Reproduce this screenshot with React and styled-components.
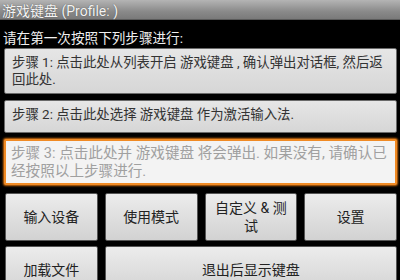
import React from 'react';
import styled, { createGlobalStyle } from 'styled-components';

const GlobalStyle = createGlobalStyle`
  html, body {
    margin: 0;
    padding: 0;
    background: #000;
  }
  body {
    font-family: "Roboto", "Noto Sans CJK SC", sans-serif;
  }
`;

const Screen = styled.div`
  width: 400px;
  height: 280px;
  overflow: hidden;
  background: #000;
`;

const TitleBar = styled.div`
  height: 19px;
  display: flex;
  align-items: center;
  padding-left: 2px;
  background: linear-gradient(#b4b4b4, #8a8a8a 60%, #7a7a7a);
  border-bottom: 1px solid #5a5a5a;
  color: #f4f4f4;
  font-size: 14px;
  text-shadow: 0 0 1px #444;
`;

const Intro = styled.div`
  color: #f0f0f0;
  font-size: 13.6px;
  padding: 7px 3px 0;
  height: 21px;
`;

const Steps = styled.div`
  display: flex;
  flex-direction: column;
  gap: 6px;
  padding: 0 3px 0 4px;
`;

const Step = styled.div`
  background: ${p => (p.$active ? '#f3f3f3' : 'linear-gradient(#e6e6e6, #d6d6d6)')};
  border: ${p => (p.$active ? '2px solid #f08a24' : '1px solid #6a6a6a')};
  box-shadow: ${p => (p.$active ? '0 0 2px 1px #c86a10' : 'none')};
  border-radius: 2px;
  color: ${p => (p.$active ? '#a0a0a0' : '#333')};
  font-size: ${p => (p.$active ? '14.6px' : '13.4px')};
  line-height: ${p => (p.$active ? '18px' : '17px')};
  padding: ${p => (p.$active ? '3px 5px 3px 5px' : '5px 4px 5px 7px')};
  min-height: ${p => p.$h}px;
  box-sizing: border-box;
`;

const Buttons = styled.div`
  display: grid;
  grid-template-columns: repeat(4, 1fr);
  grid-auto-rows: 48px;
  gap: 5px 7px;
  padding: 8px 3px 0 5px;
`;

const Button = styled.div`
  grid-column: span ${p => p.$span || 1};
  display: flex;
  align-items: center;
  justify-content: center;
  text-align: center;
  padding: 0 5px;
  background: linear-gradient(#ececec, #d2d2d2);
  border: 1px solid #555;
  border-radius: 2px;
  color: #222;
  font-size: 14px;
  line-height: 18px;
`;

const App = () => {
  return (
    <Screen>
      <GlobalStyle />
      <TitleBar>游戏键盘 (Profile: )</TitleBar>
      <Intro>请在第一次按照下列步骤进行:</Intro>
      <Steps>
        <Step $h={44}>步骤 1: 点击此处从列表开启 游戏键盘 , 确认弹出对话框, 然后返回此处.</Step>
        <Step $h={33}>步骤 2: 点击此处选择 游戏键盘 作为激活输入法.</Step>
        <Step $active $h={46}>步骤 3: 点击此处并 游戏键盘 将会弹出. 如果没有, 请确认已经按照以上步骤进行.</Step>
      </Steps>
      <Buttons>
        <Button>输入设备</Button>
        <Button>使用模式</Button>
        <Button>自定义 &amp; 测试</Button>
        <Button>设置</Button>
        <Button>加载文件</Button>
        <Button $span={3}>退出后显示键盘</Button>
      </Buttons>
    </Screen>
  );
};

export default App;
